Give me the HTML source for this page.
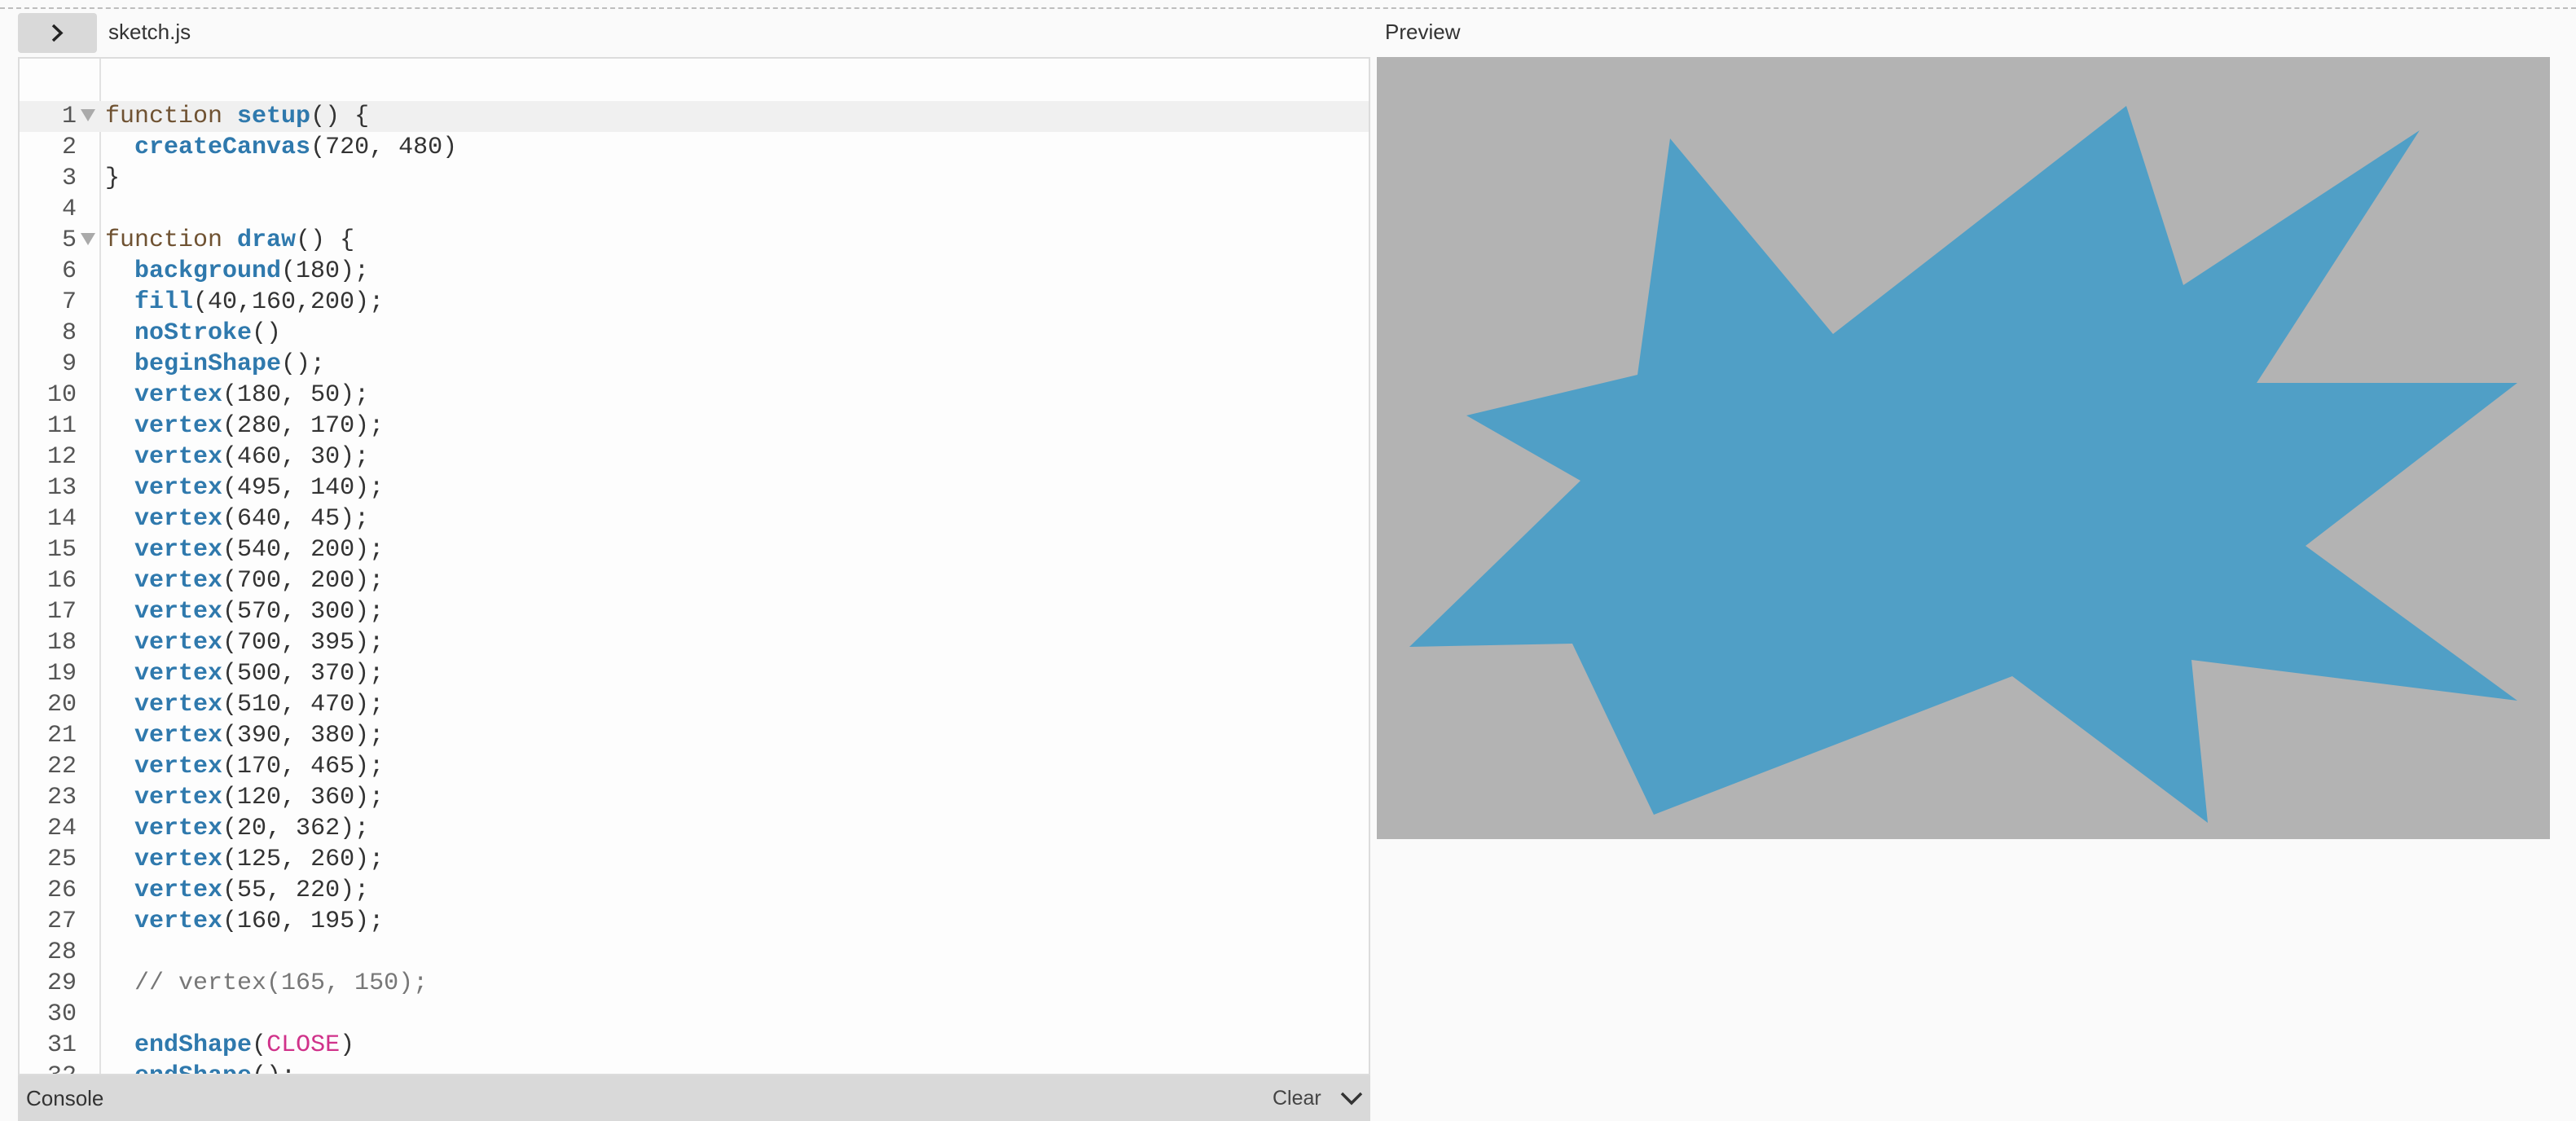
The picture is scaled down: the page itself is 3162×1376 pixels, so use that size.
<!DOCTYPE html>
<html><head><meta charset="utf-8"><style>
body{margin:0;width:3162px;height:1376px;background:#fafafa;position:relative;overflow:hidden;font-family:"Liberation Sans",sans-serif}
.dash{position:absolute;left:0;top:9px;width:3162px;border-top:2px dashed #bdbdbd}
.btn{position:absolute;left:22px;top:16px;width:97px;height:49px;background:#d9d9d9;border-radius:4px}
.lbl{position:absolute;font-size:26px;color:#333}
.ed{position:absolute;left:22px;top:70px;width:1660px;height:1250px;background:#fdfdfd;border:2px solid #dcdcdc;box-sizing:border-box;overflow:hidden}
.gut{position:absolute;left:0;top:0;width:98px;height:100%;border-right:2px solid #e2e2e2}
.hl{position:absolute;left:0;top:52px;width:100%;height:38px;background:#f0f0f0}
.code{position:absolute;left:0;top:52px;font-family:"Liberation Mono",monospace;font-size:30px;line-height:38px;white-space:pre;color:#333}
.ln{display:inline-block;width:70px;text-align:right;color:#555;margin-right:35px}
.k{color:#6f5232}.f{color:#2f79ad;font-weight:bold}.c{color:#777}.m{color:#d0328a}
.tri{position:absolute;left:75px;width:0;height:0;border-left:9px solid transparent;border-right:9px solid transparent;border-top:15px solid #aaa}
.con{position:absolute;left:22px;top:1320px;width:1660px;height:56px;background:#d9d9d9}
</style></head><body>
<div class="dash"></div>
<div class="btn"><svg width="97" height="49" viewBox="0 0 97 49"><path d="M43 15 L53 24.5 L43 34" fill="none" stroke="#222" stroke-width="3.5"/></svg></div>
<div class="lbl" style="left:133px;top:24px">sketch.js</div>
<div class="lbl" style="left:1700px;top:24px">Preview</div>
<div class="ed">
<div class="gut"></div>
<div class="hl"></div>
<div class="tri" style="top:62px"></div>
<div class="tri" style="top:214px"></div>
<div class="code"><span class="ln">1</span><span class="k">function</span> <span class="f">setup</span>() {
<span class="ln">2</span>  <span class="f">createCanvas</span>(720, 480)
<span class="ln">3</span>}
<span class="ln">4</span>
<span class="ln">5</span><span class="k">function</span> <span class="f">draw</span>() {
<span class="ln">6</span>  <span class="f">background</span>(180);
<span class="ln">7</span>  <span class="f">fill</span>(40,160,200);
<span class="ln">8</span>  <span class="f">noStroke</span>()
<span class="ln">9</span>  <span class="f">beginShape</span>();
<span class="ln">10</span>  <span class="f">vertex</span>(180, 50);
<span class="ln">11</span>  <span class="f">vertex</span>(280, 170);
<span class="ln">12</span>  <span class="f">vertex</span>(460, 30);
<span class="ln">13</span>  <span class="f">vertex</span>(495, 140);
<span class="ln">14</span>  <span class="f">vertex</span>(640, 45);
<span class="ln">15</span>  <span class="f">vertex</span>(540, 200);
<span class="ln">16</span>  <span class="f">vertex</span>(700, 200);
<span class="ln">17</span>  <span class="f">vertex</span>(570, 300);
<span class="ln">18</span>  <span class="f">vertex</span>(700, 395);
<span class="ln">19</span>  <span class="f">vertex</span>(500, 370);
<span class="ln">20</span>  <span class="f">vertex</span>(510, 470);
<span class="ln">21</span>  <span class="f">vertex</span>(390, 380);
<span class="ln">22</span>  <span class="f">vertex</span>(170, 465);
<span class="ln">23</span>  <span class="f">vertex</span>(120, 360);
<span class="ln">24</span>  <span class="f">vertex</span>(20, 362);
<span class="ln">25</span>  <span class="f">vertex</span>(125, 260);
<span class="ln">26</span>  <span class="f">vertex</span>(55, 220);
<span class="ln">27</span>  <span class="f">vertex</span>(160, 195);
<span class="ln">28</span>
<span class="ln">29</span>  <span class="c">// vertex(165, 150);</span>
<span class="ln">30</span>
<span class="ln">31</span>  <span class="f">endShape</span>(<span class="m">CLOSE</span>)
<span class="ln">32</span>  <span class="f">endShape</span>();
</div>
</div>
<div class="con">
<div class="lbl" style="left:10px;top:13px;font-size:26px">Console</div>
<div class="lbl" style="left:1540px;top:14px;font-size:25px;color:#444">Clear</div>
<svg style="position:absolute;left:1622px;top:16px" width="30" height="24"><path d="M3 6 L15 18 L27 6" fill="none" stroke="#333" stroke-width="3.5"/></svg>
</div>
<svg style="position:absolute;left:1690px;top:70px" width="1440" height="960" viewBox="0 0 720 480">
<rect width="720" height="480" fill="#b3b3b3"/>
<polygon fill="#509fc6" points="180,50 280,170 460,30 495,140 640,45 540,200 700,200 570,300 700,395 500,370 510,470 390,380 170,465 120,360 20,362 125,260 55,220 160,195"/>
</svg>
</body></html>
